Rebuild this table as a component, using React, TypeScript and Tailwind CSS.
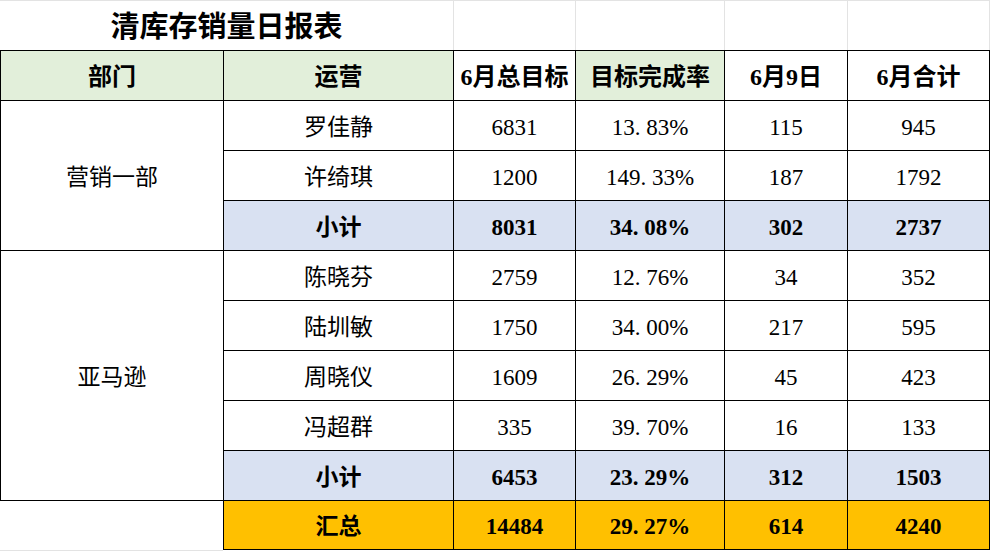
import React from 'react';

const FONT = "font-['Liberation_Serif','Noto_Sans_CJK_SC',serif]";
const COLS = 'grid grid-cols-[223px_230px_122px_149px_123px_143px]';

type Row = {
  name: string;
  target: string;
  rate: string;
  day: string;
  total: string;
  kind?: 'normal' | 'sub' | 'sum';
};

const rowsA: Row[] = [
  { name: '罗佳静', target: '6831', rate: '13.83%', day: '115', total: '945' },
  { name: '许绮琪', target: '1200', rate: '149.33%', day: '187', total: '1792' },
  { name: '小计', target: '8031', rate: '34.08%', day: '302', total: '2737', kind: 'sub' },
];

const rowsB: Row[] = [
  { name: '陈晓芬', target: '2759', rate: '12.76%', day: '34', total: '352' },
  { name: '陆圳敏', target: '1750', rate: '34.00%', day: '217', total: '595' },
  { name: '周晓仪', target: '1609', rate: '26.29%', day: '45', total: '423' },
  { name: '冯超群', target: '335', rate: '39.70%', day: '16', total: '133' },
  { name: '小计', target: '6453', rate: '23.29%', day: '312', total: '1503', kind: 'sub' },
];

// SimSun style: the period takes a full half-width cell
function Num({ value }: { value: string }) {
  const [whole, frac] = value.split('.');
  if (frac === undefined) return <>{value}</>;
  return (
    <span>
      {whole}
      <span className="inline-block w-[0.5em] text-left">.</span>
      {frac}
    </span>
  );
}

function Cell({
  children,
  className = '',
}: {
  children?: React.ReactNode;
  className?: string;
}) {
  return (
    <div className={`flex items-center justify-center border-l border-t border-black pt-[3px] ${className}`}>
      {children}
    </div>
  );
}

function DataRow({ row, last = false }: { row: Row; last?: boolean }) {
  const bg =
    row.kind === 'sub' ? 'bg-[#d9e1f2] font-bold' : row.kind === 'sum' ? 'bg-[#ffc000] font-bold' : 'bg-white';
  const b = last ? 'border-b' : '';
  return (
    <>
      <Cell className={`${bg} ${b}`}>{row.name}</Cell>
      <Cell className={`${bg} ${b}`}>
        <Num value={row.target} />
      </Cell>
      <Cell className={`${bg} ${b}`}>
        <Num value={row.rate} />
      </Cell>
      <Cell className={`${bg} ${b}`}>
        <Num value={row.day} />
      </Cell>
      <Cell className={`${bg} ${b} border-r`}>
        <Num value={row.total} />
      </Cell>
    </>
  );
}

export default function App() {
  return (
    <div className={`w-[990px] h-[551px] bg-white text-black ${FONT} text-[23px] leading-none overflow-hidden`}>
      {/* title row */}
      <div className={`${COLS} h-[50px]`}>
        <div className="col-span-2 flex items-center justify-center border-t border-[#e3e3e3] text-[29px] font-bold pt-[4px]">
          清库存销量日报表
        </div>
        <div className="border-l border-t border-[#e3e3e3]" />
        <div className="border-l border-t border-[#e3e3e3]" />
        <div className="border-l border-t border-[#e3e3e3]" />
        <div className="border-l border-t border-r border-[#e3e3e3]" />
      </div>

      <div className={`${COLS} auto-rows-[50px]`}>
        {/* header */}
        <Cell className="bg-[#e2efda] font-bold text-[24px]">部门</Cell>
        <Cell className="bg-[#e2efda] font-bold text-[24px]">运营</Cell>
        <Cell className="bg-white font-bold text-[24px]">6月总目标</Cell>
        <Cell className="bg-[#e2efda] font-bold text-[24px]">目标完成率</Cell>
        <Cell className="bg-white font-bold text-[24px]">6月9日</Cell>
        <Cell className="bg-white font-bold text-[24px] border-r">6月合计</Cell>

        {/* 营销一部 */}
        <Cell className="row-span-3 bg-white">营销一部</Cell>
        {rowsA.map((r) => (
          <DataRow key={r.name + r.target} row={r} />
        ))}

        {/* 亚马逊 */}
        <Cell className="row-span-5 bg-white">亚马逊</Cell>
        {rowsB.map((r) => (
          <DataRow key={r.name + r.target} row={r} />
        ))}

        {/* 汇总 */}
        <div className="h-[51px] border-t border-b border-t-black border-b-[#e3e3e3]" />
        <DataRow
          row={{ name: '汇总', target: '14484', rate: '29.27%', day: '614', total: '4240', kind: 'sum' }}
          last
        />
      </div>
    </div>
  );
}
